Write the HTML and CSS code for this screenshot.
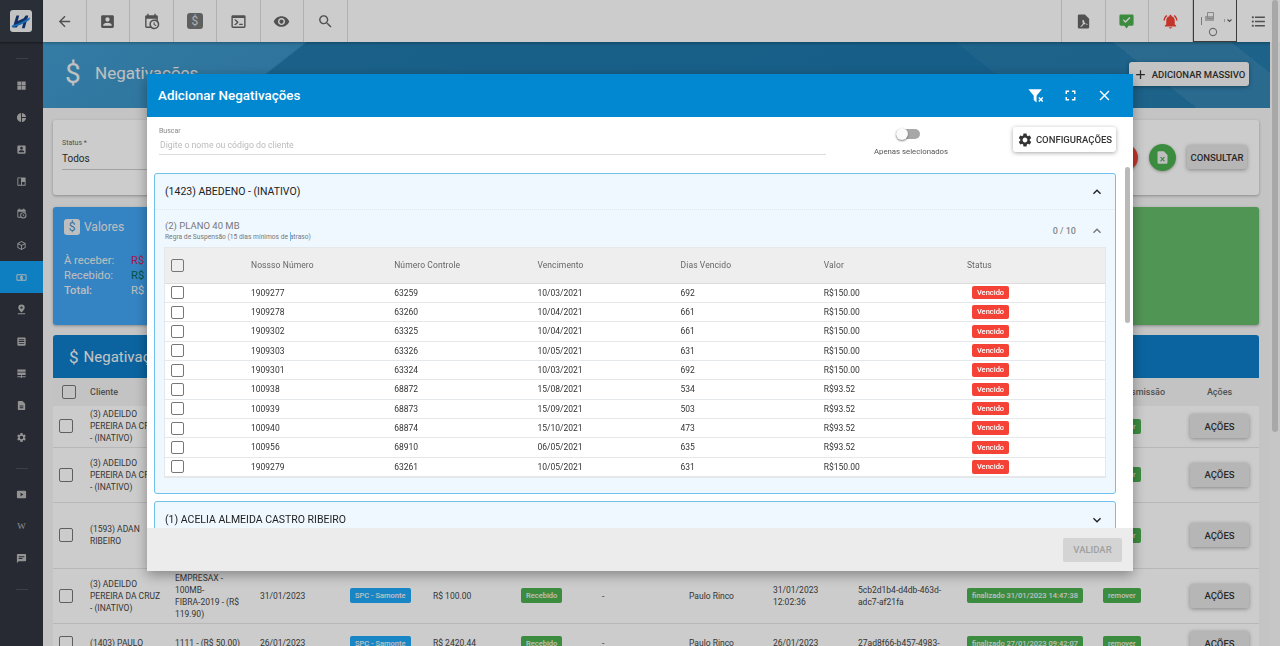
FILE: index.html
```html
<!DOCTYPE html>
<html lang="pt-BR">
<head>
    <meta charset="UTF-8">
    <title>Negativações</title>
    <link rel="stylesheet" href="styles.css">
</head>
<body>
    <svg class="sprite" xmlns="http://www.w3.org/2000/svg">
        <symbol id="i-back" viewBox="0 0 24 24"><path d="M20 11H7.83l5.59-5.59L12 4l-8 8 8 8 1.41-1.41L7.83 13H20v-2z"/></symbol>
        <symbol id="i-account" viewBox="0 0 24 24"><path d="M3 5v14c0 1.1.89 2 2 2h14c1.1 0 2-.9 2-2V5c0-1.1-.9-2-2-2H5c-1.11 0-2 .9-2 2zm12 4c0 1.66-1.34 3-3 3s-3-1.34-3-3 1.34-3 3-3 3 1.34 3 3zm-9 8c0-2 4-3.1 6-3.1s6 1.1 6 3.1v1H6v-1z"/></symbol>
        <symbol id="i-calendar" viewBox="0 0 24 24"><path d="M15,13H16.5V15.82L18.94,17.23L18.19,18.53L15,16.69V13M19,8H5V19H9.67C9.24,18.09 9,17.07 9,16A7,7 0 0,1 16,9C17.07,9 18.09,9.24 19,9.67V8M5,21C3.89,21 3,20.1 3,19V5C3,3.89 3.89,3 5,3H6V1H8V3H16V1H18V3H19A2,2 0 0,1 21,5V11.1C22.24,12.36 23,14.09 23,16A7,7 0 0,1 16,23C14.09,23 12.36,22.24 11.1,21H5M16,11.15A4.85,4.85 0 0,0 11.15,16C11.15,18.68 13.32,20.85 16,20.85A4.85,4.85 0 0,0 20.85,16C20.85,13.32 18.68,11.15 16,11.15Z"/></symbol>
        <symbol id="i-console" viewBox="0 0 24 24"><path d="M20,19V7H4V19H20M20,3A2,2 0 0,1 22,5V19A2,2 0 0,1 20,21H4A2,2 0 0,1 2,19V5C2,3.89 2.9,3 4,3H20M13,17V15H18V17H13M9.58,13L5.57,9H8.4L11.7,12.3C12.09,12.69 12.09,13.33 11.7,13.72L8.42,17H5.59L9.58,13Z"/></symbol>
        <symbol id="i-eye" viewBox="0 0 24 24"><path d="M12 4.5C7 4.5 2.73 7.61 1 12c1.73 4.39 6 7.5 11 7.5s9.27-3.11 11-7.5c-1.73-4.39-6-7.5-11-7.5zM12 17c-2.76 0-5-2.24-5-5s2.24-5 5-5 5 2.24 5 5-2.24 5-5 5zm0-8c-1.66 0-3 1.34-3 3s1.34 3 3 3 3-1.34 3-3-1.34-3-3-3z"/></symbol>
        <symbol id="i-search" viewBox="0 0 24 24"><path d="M15.5 14h-.79l-.28-.27C15.41 12.59 16 11.11 16 9.5 16 5.91 13.09 3 9.5 3S3 5.91 3 9.5 5.91 16 9.5 16c1.61 0 3.09-.59 4.23-1.57l.27.28v.79l5 4.99L20.49 19l-4.99-5zm-6 0C7.01 14 5 11.99 5 9.5S7.01 5 9.5 5 14 7.01 14 9.5 11.99 14 9.5 14z"/></symbol>
        <symbol id="i-pdf" viewBox="0 0 24 24"><path fill-rule="evenodd" d="M6 2h8l6 6v12a2 2 0 0 1-2 2H6a2 2 0 0 1-2-2V4a2 2 0 0 1 2-2zm5.300 8c-.9 0-1.100 1-.8 2.400.2.7.4 1.300.7 1.900-.7 1.600-1.800 3.200-3 4-.8.5-.5 1.500.4 1.300 1.200-.3 2.600-1.900 3.400-3.300 1-.3 2-.5 3-.6.9.8 1.900 1.300 2.500 1 .7-.4.300-1.500-.8-1.600-.5 0-1.200 0-1.900.1-.8-.9-1.500-2-1.900-3 .2-1 .1-2.200-1.600-2.200z"/></symbol>
        <symbol id="i-message" viewBox="0 0 24 24"><path fill-rule="evenodd" d="M4 2h16a2 2 0 0 1 2 2v12a2 2 0 0 1-2 2h-5l-3 4-3-4H4a2 2 0 0 1-2-2V4a2 2 0 0 1 2-2zm6.500 12.200 7-7-1.400-1.400-5.600 5.600-2.600-2.600L7 10.200z"/></symbol>
        <symbol id="i-bell" viewBox="0 0 24 24"><path d="M7.58 4.08 6.15 2.65C3.75 4.48 2.17 7.3 2.03 10.5h2c.15-2.65 1.51-4.97 3.55-6.42zm12.39 6.42h2c-.15-3.2-1.73-6.02-4.12-7.85l-1.42 1.43c2.02 1.45 3.39 3.77 3.54 6.42zM18 11c0-3.07-1.64-5.64-4.5-6.32V4c0-.83-.67-1.5-1.5-1.5s-1.5.67-1.5 1.5v.68C7.63 5.36 6 7.92 6 11v5l-2 2v1h16v-1l-2-2v-5zm-6 11c.14 0 .27-.01.4-.04.65-.14 1.18-.58 1.44-1.18.1-.24.15-.5.15-.78h-4c.01 1.1.9 2 2.01 2z"/></symbol>
        <symbol id="i-list" viewBox="0 0 24 24"><path d="M4 10.5c-.83 0-1.5.67-1.5 1.500s.67 1.500 1.500 1.500 1.500-.67 1.500-1.500-.67-1.500-1.500-1.500zm0-6c-.83 0-1.500.67-1.500 1.500S3.170 7.500 4 7.500 5.500 6.830 5.500 6 4.830 4.500 4 4.500zm0 12c-.83 0-1.500.68-1.500 1.500s.68 1.500 1.500 1.500 1.500-.68 1.500-1.500-.67-1.500-1.500-1.500zM7 19h14v-2H7v2zm0-6h14v-2H7v2zm0-8v2h14V5H7z"/></symbol>
        <symbol id="i-plus" viewBox="0 0 24 24"><path d="M19 13h-6v6h-2v-6H5v-2h6V5h2v6h6v2z"/></symbol>
        <symbol id="i-close" viewBox="0 0 24 24"><path d="M19 6.410 17.590 5 12 10.590 6.410 5 5 6.410 10.590 12 5 17.590 6.410 19 12 13.410 17.590 19 19 17.590 13.410 12z"/></symbol>
        <symbol id="i-full" viewBox="0 0 24 24"><path d="M7 14H5v5h5v-2H7v-3zM5 10h2V7h3V5H5v5zm12 7h-3v2h5v-5h-2v3zM14 5v2h3v3h2V5h-5z"/></symbol>
        <symbol id="i-up" viewBox="0 0 24 24"><path d="M7.410 15.410 12 10.830l4.590 4.580L18 14l-6-6-6 6z"/></symbol>
        <symbol id="i-down" viewBox="0 0 24 24"><path d="M7.410 8.590 12 13.170l4.590-4.580L18 10l-6 6-6-6z"/></symbol>
        <symbol id="i-gear" viewBox="0 0 24 24"><path d="M19.14 12.94c.04-.3.06-.61.06-.94 0-.32-.02-.64-.07-.94l2.03-1.58c.18-.14.23-.41.12-.61l-1.92-3.32c-.12-.22-.37-.29-.59-.22l-2.39.96c-.5-.38-1.03-.7-1.62-.94l-.36-2.54c-.04-.24-.24-.41-.48-.41h-3.84c-.24 0-.43.17-.47.41l-.36 2.54c-.59.24-1.13.57-1.62.94l-2.39-.96c-.22-.08-.47 0-.59.22L2.74 8.87c-.12.21-.08.47.12.61l2.03 1.58c-.05.3-.09.63-.09.94s.02.64.07.94l-2.03 1.58c-.18.14-.23.41-.12.61l1.92 3.32c.12.22.37.29.59.22l2.39-.96c.5.38 1.03.7 1.62.94l.36 2.54c.05.24.24.41.48.41h3.84c.24 0 .44-.17.47-.41l.36-2.54c.59-.24 1.13-.56 1.62-.94l2.39.96c.22.08.47 0 .59-.22l1.92-3.32c.12-.22.07-.47-.12-.61l-2.01-1.58zM12 15.6c-1.98 0-3.6-1.62-3.6-3.6s1.62-3.6 3.6-3.6 3.6 1.62 3.6 3.6-1.62 3.6-3.6 3.6z"/></symbol>
        <symbol id="i-filter" viewBox="0 0 24 24"><path d="M2 3h19l-7.500 9.500V22l-4-3.500v-6z"/><path d="M16 15.400 17.400 14l2.100 2.100L21.600 14l1.400 1.400-2.100 2.100 2.100 2.100-1.400 1.400-2.100-2.100-2.100 2.100-1.400-1.400 2.100-2.100z"/></symbol>
        <symbol id="i-grid" viewBox="0 0 24 24"><path d="M3 3h8.500v8.500H3zM12.500 3H21v8.500h-8.500zM3 12.500h8.500V21H3zM12.500 12.500H21V21h-8.500z"/></symbol>
        <symbol id="i-pie" viewBox="0 0 24 24"><path d="M11 2v20c-5.070-.5-9-4.790-9-10s3.930-9.500 9-10zm2 0v9h9c-.47-4.740-4.260-8.530-9-9zm0 11v9c4.740-.47 8.530-4.260 9-9h-9z"/></symbol>
        <symbol id="i-board" viewBox="0 0 24 24"><path fill-rule="evenodd" d="M4 3h16a1 1 0 0 1 1 1v16a1 1 0 0 1-1 1H4a1 1 0 0 1-1-1V4a1 1 0 0 1 1-1zm1 2v14h6V5zm8 8v6h6v-6z"/></symbol>
        <symbol id="i-cube" viewBox="0 0 24 24"><path fill-rule="evenodd" d="M12 2l9 5v10l-9 5-9-5V7zm0 2.300L6.100 7.600 12 10.900l5.900-3.300zM5 9.300v6.500l6 3.400v-6.600zm14 0-6 3.300v6.600l6-3.400z"/></symbol>
        <symbol id="i-money" viewBox="0 0 24 24"><path fill-rule="evenodd" d="M3 5h18a2 2 0 0 1 2 2v10a2 2 0 0 1-2 2H3a2 2 0 0 1-2-2V7a2 2 0 0 1 2-2zm0 2v10h18V7zm8 1h2v1h2v2h-4v.5h3a1 1 0 0 1 1 1V15a1 1 0 0 1-1 1h-1v1h-2v-1H9v-2h4v-.5h-3a1 1 0 0 1-1-1V10a1 1 0 0 1 1-1h1z"/></symbol>
        <symbol id="i-pin" viewBox="0 0 24 24"><path fill-rule="evenodd" d="M12 1a7 7 0 0 1 7 7c0 4.500-7 10-7 10S5 12.500 5 8a7 7 0 0 1 7-7zm0 4.500a2.500 2.500 0 1 0 0 5 2.500 2.500 0 0 0 0-5zM4 20h16v2.500H4z"/></symbol>
        <symbol id="i-lines" viewBox="0 0 24 24"><path fill-rule="evenodd" d="M5 3h14a2 2 0 0 1 2 2v14a2 2 0 0 1-2 2H5a2 2 0 0 1-2-2V5a2 2 0 0 1 2-2zm1 4v2h12V7zm0 4v2h12v-2zm0 4v2h12v-2z"/></symbol>
        <symbol id="i-server" viewBox="0 0 24 24"><path d="M3 3h18v5H3zM3 10h18v5H3zM11 16h2v2h8v2h-8v2h-2v-2H3v-2h8z"/></symbol>
        <symbol id="i-doc" viewBox="0 0 24 24"><path fill-rule="evenodd" d="M6 2h8l6 6v12a2 2 0 0 1-2 2H6a2 2 0 0 1-2-2V4a2 2 0 0 1 2-2zm2 10v2h8v-2zm0 4v2h8v-2z"/></symbol>
        <symbol id="i-video" viewBox="0 0 24 24"><path fill-rule="evenodd" d="M4 4h16a2 2 0 0 1 2 2v12a2 2 0 0 1-2 2H4a2 2 0 0 1-2-2V6a2 2 0 0 1 2-2zm6 4v8l6-4z"/></symbol>
        <symbol id="i-chat" viewBox="0 0 24 24"><path fill-rule="evenodd" d="M4 2h16a2 2 0 0 1 2 2v12a2 2 0 0 1-2 2H6l-4 4V4a2 2 0 0 1 2-2zm2 5v2h12V7zm0 4v2h8v-2z"/></symbol>
        <symbol id="i-excel" viewBox="0 0 24 24"><path fill-rule="evenodd" d="M6 2h8l6 6v12a2 2 0 0 1-2 2H6a2 2 0 0 1-2-2V4a2 2 0 0 1 2-2zm1.800 9 3 3.500-3 3.500h2.400l1.800-2.200 1.800 2.200h2.400l-3-3.500 3-3.500h-2.400L12 13.200 10.200 11z"/></symbol>
    </svg>

    <aside class="sidebar">
        <div class="logo-wrap">
            <div class="logo">
                <svg viewBox="0 0 24 24" class="logo-svg">
                    <path fill="#1a3d7c" d="M3 19 7 6h3l-1.500 6L15 9l2-3h3l-4 14h-3l1.500-6-6 3-1 2z"/>
                    <path fill="#1e88e5" d="M2 17c6-1 13-5 20-9l-1 3c-6 4-13 7-19 8z"/>
                </svg>
            </div>
        </div>
        <div class="side-rule"></div>
        <nav class="side-nav">
            <a class="side-item"><svg><use href="#i-grid"/></svg></a>
            <a class="side-item"><svg><use href="#i-pie"/></svg></a>
            <a class="side-item"><svg><use href="#i-account"/></svg></a>
            <a class="side-item"><svg><use href="#i-board"/></svg></a>
            <a class="side-item"><svg><use href="#i-calendar"/></svg></a>
            <a class="side-item"><svg><use href="#i-cube"/></svg></a>
            <a class="side-item active"><svg><use href="#i-money"/></svg></a>
            <a class="side-item"><svg><use href="#i-pin"/></svg></a>
            <a class="side-item"><svg><use href="#i-lines"/></svg></a>
            <a class="side-item"><svg><use href="#i-server"/></svg></a>
            <a class="side-item"><svg><use href="#i-doc"/></svg></a>
            <a class="side-item"><svg><use href="#i-gear"/></svg></a>
        </nav>
        <div class="side-rule low"></div>
        <nav class="side-nav">
            <a class="side-item"><svg><use href="#i-video"/></svg></a>
            <a class="side-item wiki">W</a>
            <a class="side-item"><svg><use href="#i-chat"/></svg></a>
        </nav>
        <div class="side-rule low"></div>
    </aside>

    <div class="main">
        <header class="topbar">
            <a class="top-item"><svg><use href="#i-back"/></svg></a>
            <a class="top-item"><svg><use href="#i-account"/></svg></a>
            <a class="top-item"><svg><use href="#i-calendar"/></svg></a>
            <a class="top-item"><span class="dollar-box">$</span></a>
            <a class="top-item"><svg><use href="#i-console"/></svg></a>
            <a class="top-item"><svg><use href="#i-eye"/></svg></a>
            <a class="top-item"><svg><use href="#i-search"/></svg></a>
            <div class="top-space"></div>
            <a class="top-item"><svg><use href="#i-pdf"/></svg></a>
            <a class="top-item green"><svg><use href="#i-message"/></svg></a>
            <a class="top-item red"><svg><use href="#i-bell"/></svg></a>
            <a class="top-user">
                <svg viewBox="0 0 41 40" class="user-svg">
                    <rect x="7" y="17" width="1" height="8" fill="#999"/>
                    <path fill="#c4c4c4" d="M11 16h9v5h-9z"/>
                    <path fill="none" stroke="#aaa" d="M13.500 12.500h6v6h-6z"/>
                    <rect x="30" y="19" width="1" height="3" fill="#bbb"/>
                    <path fill="none" stroke="#666" stroke-width="1.100" d="M33.500 19.500l2 2 2-2"/>
                    <circle cx="19" cy="32" r="3.600" fill="none" stroke="#888" stroke-width="1.100"/>
                </svg>
            </a>
            <a class="top-item last"><svg><use href="#i-list"/></svg></a>
        </header>

        <div class="page">
            <div class="hero">
                <span class="hero-dollar">$</span>
                <h1>Negativações</h1>
                <button class="btn btn-massivo"><svg><use href="#i-plus"/></svg>ADICIONAR MASSIVO</button>
            </div>

            <div class="content">
                <section class="filters">
                    <div class="field">
                        <label>Status *</label>
                        <div class="field-value">Todos</div>
                    </div>
                    <div class="filter-actions">
                        <span class="round red-round"></span>
                        <span class="round green-round"><svg><use href="#i-excel"/></svg></span>
                        <button class="btn btn-consultar">CONSULTAR</button>
                    </div>
                </section>

                <section class="summary">
                    <div class="sum-card sum-blue">
                        <div class="sum-title"><span class="sum-dollar">$</span>Valores</div>
                        <div class="sum-line"><span>À receber:</span><b class="pink">R$ 1</b></div>
                        <div class="sum-line"><span>Recebido:</span><b class="teal">R$ 2</b></div>
                        <div class="sum-line total"><span>Total:</span><b>R$ 3</b></div>
                    </div>
                    <div class="sum-card sum-green"></div>
                </section>

                <section class="list-card">
                    <div class="list-head"><span class="list-dollar">$</span>Negativações</div>
                    <table class="list-table">
                        <colgroup>
                            <col class="c-check"><col class="c-client"><col class="c-plan"><col class="c-date">
                            <col class="c-spc"><col class="c-value"><col class="c-status"><col class="c-dash">
                            <col class="c-user"><col class="c-sent"><col class="c-uuid"><col class="c-final">
                            <col class="c-remove"><col class="c-actions">
                        </colgroup>
                        <thead>
                            <tr>
                                <th><span class="check"></span></th>
                                <th>Cliente</th><th></th><th></th><th></th><th></th><th></th><th></th>
                                <th></th><th></th><th></th><th></th><th class="trans">Transmissão</th><th class="center">Ações</th>
                            </tr>
                        </thead>
                        <tbody>
                            <tr>
                                <td><span class="check"></span></td>
                                <td>(3) ADEILDO<br>PEREIRA DA CRUZ<br>- (INATIVO)</td><td></td><td></td><td></td><td></td><td></td><td></td><td></td><td></td><td></td><td></td>
                                <td><span class="tag tag-green">remover</span></td>
                                <td class="center"><button class="btn btn-acoes">AÇÕES</button></td>
                            </tr>
                            <tr>
                                <td><span class="check"></span></td>
                                <td>(3) ADEILDO<br>PEREIRA DA CRUZ<br>- (INATIVO)</td><td></td><td></td><td></td><td></td><td></td><td></td><td></td><td></td><td></td><td></td>
                                <td><span class="tag tag-green">remover</span></td>
                                <td class="center"><button class="btn btn-acoes">AÇÕES</button></td>
                            </tr>
                            <tr>
                                <td><span class="check"></span></td>
                                <td>(1593) ADAN<br>RIBEIRO</td><td></td><td></td><td></td><td></td><td></td><td></td><td></td><td></td><td></td><td></td>
                                <td><span class="tag tag-green">remover</span></td>
                                <td class="center"><button class="btn btn-acoes">AÇÕES</button></td>
                            </tr>
                            <tr>
                                <td><span class="check"></span></td>
                                <td>(3) ADEILDO<br>PEREIRA DA CRUZ<br>- (INATIVO)</td>
                                <td>EMPRESAX -<br>100MB-<br>FIBRA-2019 - (R$<br>119.90)</td>
                                <td>31/01/2023</td>
                                <td><span class="tag tag-blue">SPC - Samonte</span></td>
                                <td>R$ 100.00</td>
                                <td><span class="tag tag-green">Recebido</span></td>
                                <td>-</td>
                                <td>Paulo Rinco</td>
                                <td>31/01/2023<br>12:02:36</td>
                                <td>5cb2d1b4-d4db-463d-<br>adc7-af21fa</td>
                                <td><span class="tag tag-green">finalizado 31/01/2023 14:47:38</span></td>
                                <td><span class="tag tag-green">remover</span></td>
                                <td class="center"><button class="btn btn-acoes">AÇÕES</button></td>
                            </tr>
                            <tr>
                                <td><span class="check"></span></td>
                                <td>(1403) PAULO</td>
                                <td>1111 - (R$ 50.00)</td>
                                <td>26/01/2023</td>
                                <td><span class="tag tag-blue">SPC - Samonte</span></td>
                                <td>R$ 2420.44</td>
                                <td><span class="tag tag-green">Recebido</span></td>
                                <td>-</td>
                                <td>Paulo Rinco</td>
                                <td>26/01/2023</td>
                                <td>27ad8f66-b457-4983-</td>
                                <td><span class="tag tag-green">finalizado 27/01/2023 09:42:07</span></td>
                                <td><span class="tag tag-green">remover</span></td>
                                <td class="center"><button class="btn btn-acoes">AÇÕES</button></td>
                            </tr>
                        </tbody>
                    </table>
                </section>
            </div>
        </div>
    </div>

    <div class="page-scroll"><div class="page-thumb"></div></div>

    <!-- dialog backdrop + modal -->
    <div class="backdrop"></div>
    <div class="modal">
        <div class="modal-head">
            <h2>Adicionar Negativações</h2>
            <div class="modal-tools">
                <svg><use href="#i-filter"/></svg>
                <svg><use href="#i-full"/></svg>
                <svg><use href="#i-close"/></svg>
            </div>
        </div>

        <div class="modal-search">
            <div class="search-field">
                <label>Buscar</label>
                <div class="search-input">Digite o nome ou código do cliente</div>
            </div>
            <div class="toggle-wrap">
                <span class="toggle"><span class="toggle-knob"></span></span>
                <span class="toggle-label">Apenas selecionados</span>
            </div>
            <button class="btn btn-config"><svg><use href="#i-gear"/></svg>CONFIGURAÇÕES</button>
        </div>

        <div class="modal-list">
            <div class="acc">
                <div class="acc-head">
                    <span>(1423) ABEDENO - (INATIVO)</span>
                    <svg><use href="#i-up"/></svg>
                </div>
                <div class="plan-head">
                    <div>
                        <div class="plan-name">(2) PLANO 40 MB</div>
                        <div class="plan-rule">Regra de Suspensão (15 dias mínimos de atraso)</div>
                    </div>
                    <div class="plan-right">
                        <span class="plan-count">0 / 10</span>
                        <svg><use href="#i-up"/></svg>
                    </div>
                </div>
                <table class="bill-table">
                    <colgroup>
                        <col class="b-check"><col class="b-col"><col class="b-col"><col class="b-col"><col class="b-col"><col class="b-col"><col class="b-last">
                    </colgroup>
                    <thead>
                        <tr>
                            <th><span class="check"></span></th>
                            <th>Nossso Número</th><th>Número Controle</th><th>Vencimento</th><th>Dias Vencido</th><th>Valor</th><th>Status</th>
                        </tr>
                    </thead>
                    <tbody>
                        <tr><td><span class="check"></span></td><td>1909277</td><td>63259</td><td>10/03/2021</td><td>692</td><td>R$150.00</td><td><span class="tag tag-red">Vencido</span></td></tr>
                        <tr><td><span class="check"></span></td><td>1909278</td><td>63260</td><td>10/04/2021</td><td>661</td><td>R$150.00</td><td><span class="tag tag-red">Vencido</span></td></tr>
                        <tr><td><span class="check"></span></td><td>1909302</td><td>63325</td><td>10/04/2021</td><td>661</td><td>R$150.00</td><td><span class="tag tag-red">Vencido</span></td></tr>
                        <tr><td><span class="check"></span></td><td>1909303</td><td>63326</td><td>10/05/2021</td><td>631</td><td>R$150.00</td><td><span class="tag tag-red">Vencido</span></td></tr>
                        <tr><td><span class="check"></span></td><td>1909301</td><td>63324</td><td>10/03/2021</td><td>692</td><td>R$150.00</td><td><span class="tag tag-red">Vencido</span></td></tr>
                        <tr><td><span class="check"></span></td><td>100938</td><td>68872</td><td>15/08/2021</td><td>534</td><td>R$93.52</td><td><span class="tag tag-red">Vencido</span></td></tr>
                        <tr><td><span class="check"></span></td><td>100939</td><td>68873</td><td>15/09/2021</td><td>503</td><td>R$93.52</td><td><span class="tag tag-red">Vencido</span></td></tr>
                        <tr><td><span class="check"></span></td><td>100940</td><td>68874</td><td>15/10/2021</td><td>473</td><td>R$93.52</td><td><span class="tag tag-red">Vencido</span></td></tr>
                        <tr><td><span class="check"></span></td><td>100956</td><td>68910</td><td>06/05/2021</td><td>635</td><td>R$93.52</td><td><span class="tag tag-red">Vencido</span></td></tr>
                        <tr><td><span class="check"></span></td><td>1909279</td><td>63261</td><td>10/05/2021</td><td>631</td><td>R$150.00</td><td><span class="tag tag-red">Vencido</span></td></tr>
                    </tbody>
                </table>
            </div>
            <div class="acc">
                <div class="acc-head">
                    <span>(1) ACELIA ALMEIDA CASTRO RIBEIRO</span>
                    <svg><use href="#i-down"/></svg>
                </div>
            </div>
        </div>

        <div class="modal-foot">
            <button class="btn-validar" disabled>VALIDAR</button>
        </div>

        <div class="modal-thumb"></div>
        <div class="text-cursor"></div>
    </div>
</body>
</html>
```

FILE: styles.css
```css
* {
    margin: 0;
    padding: 0;
    box-sizing: border-box;
}
html, body {
    height: 646px;
    overflow: hidden;
}
body {
    display: flex;
    font-family: Roboto, "Liberation Sans", sans-serif;
    background: #f5f5f5;
    color: #333;
}
.sprite {
    display: none;
}
svg {
    fill: currentColor;
}

/* Sidebar */
.sidebar {
    width: 43px;
    flex-shrink: 0;
    background: #31353f;
    color: #b8b8b8;
    display: flex;
    flex-direction: column;
    align-items: center;
}
.logo-wrap {
    height: 42px;
    width: 100%;
    display: flex;
    align-items: center;
    justify-content: center;
    padding-right: 2px;
    background: #353a45;
    box-shadow: 0 1px 2px rgba(0, 0, 0, 0.4);
}
.logo {
    width: 22px;
    height: 22px;
    background: #f4f4f4;
    border-radius: 3px;
}
.logo-svg {
    width: 22px;
    height: 22px;
    display: block;
}
.side-rule {
    width: 12px;
    height: 1px;
    background: #4a4f5a;
    margin: 16px 0 10px;
}
.side-rule.low {
    margin: 15px 0 9px;
}
.side-nav {
    width: 100%;
}
.side-item {
    height: 32px;
    display: flex;
    align-items: center;
    justify-content: center;
}
.side-item svg {
    width: 11px;
    height: 11px;
}
.side-item.active {
    background: #129ff0;
    color: #e0e0e0;
}
.wiki {
    font-family: "Liberation Serif", serif;
    font-size: 9px;
}

/* Top bar */
.main {
    flex: 1;
    min-width: 0;
    display: flex;
    flex-direction: column;
}
.topbar {
    height: 42px;
    flex-shrink: 0;
    background: #fff;
    display: flex;
    color: #666;
    box-shadow: 0 1px 3px rgba(0, 0, 0, 0.3);
    position: relative;
}
.top-item {
    width: 43.5px;
    display: flex;
    align-items: center;
    justify-content: center;
    border-right: 1px solid #ddd;
}
.top-item svg {
    width: 17px;
    height: 17px;
}
.top-item.last {
    border-right: 0;
}
.top-item.green {
    color: #4caf50;
}
.top-item.red {
    color: #f44336;
}
.top-space {
    flex: 1;
    border-right: 1px solid #ddd;
}
.dollar-box {
    width: 16px;
    height: 16px;
    border-radius: 3px;
    background: #777;
    color: #ddd;
    font-size: 12px;
    line-height: 16px;
    text-align: center;
}
.top-user {
    width: 44px;
    border: 1.5px solid #4a4a4a;
    border-top-width: 0;
}
.user-svg {
    width: 41px;
    height: 40px;
    display: block;
}

/* Page */
.page {
    flex: 1;
    min-height: 0;
    margin-right: 10px;
}
.hero {
    height: 66px;
    display: flex;
    align-items: center;
    padding: 0 22px 0 22px;
    color: #f0f0f0;
    background:
        linear-gradient(38deg, transparent 88%, rgba(255, 255, 255, 0.08) 88%, rgba(255, 255, 255, 0.08) 97%, transparent 97%),
        linear-gradient(38deg, transparent 76%, rgba(255, 255, 255, 0.04) 76%),
        linear-gradient(142deg, #429ccf 0%, #3a92c5 20%, #2279ab 20.2%, #1f78ab 40%, #1b76a9 100%);
}
.hero-dollar {
    font-size: 28px;
    width: 30px;
    margin-top: -3px;
}
.hero h1 {
    font-size: 17px;
    font-weight: 400;
    flex: 1;
    margin-bottom: 5px;
}
.btn {
    border: 0;
    background: #e4e4e4;
    color: #333;
    font-family: inherit;
    font-weight: 500;
    border-radius: 3px;
    box-shadow: 0 1px 4px rgba(0, 0, 0, 0.35);
    display: inline-flex;
    align-items: center;
    justify-content: center;
}
.btn svg {
    flex-shrink: 0;
}
.btn-massivo {
    width: 120px;
    height: 24px;
    font-size: 9.500px;
    background: #f5f5f5;
    margin: -2px -1px 0 0;
}
.btn-massivo svg {
    width: 15px;
    height: 15px;
    margin-right: 4px;
}
.content {
    padding: 12px 11px 0 10px;
    display: flex;
    flex-direction: column;
    gap: 12px;
}
.filters {
    height: 75px;
    background: #fff;
    border-radius: 3px;
    box-shadow: 0 1px 3px rgba(0, 0, 0, 0.3);
    display: flex;
    justify-content: space-between;
    padding: 19px 12px 0 9px;
}
.field {
    width: 300px;
}
.field label {
    display: block;
    font-size: 7px;
    color: #666;
    margin-bottom: 6px;
}
.field-value {
    font-size: 10px;
    color: #333;
    padding-bottom: 5px;
    border-bottom: 1px solid #ccc;
}
.filter-actions {
    display: flex;
    align-items: center;
    gap: 11px;
    height: 36px;
}
.round {
    width: 27px;
    height: 27px;
    border-radius: 50%;
    display: flex;
    align-items: center;
    justify-content: center;
    color: #eee;
    box-shadow: 0 1px 3px rgba(0, 0, 0, 0.3);
}
.round svg {
    width: 15px;
    height: 15px;
}
.red-round {
    background: #f44336;
}
.green-round {
    background: #4caf50;
}
.btn-consultar {
    width: 60px;
    height: 24px;
    font-size: 9.500px;
}
.summary {
    height: 118px;
    display: grid;
    grid-template-columns: 1fr 1fr;
    gap: 12px;
}
.sum-card {
    border-radius: 3px;
    box-shadow: 0 1px 3px rgba(0, 0, 0, 0.3);
    color: #eee;
    padding: 12px 11px;
    font-size: 11.200px;
}
.sum-blue {
    background: #42a5f5;
}
.sum-green {
    background: #66bb6a;
}
.sum-title {
    display: flex;
    align-items: center;
    gap: 4px;
    font-size: 12px;
    margin-bottom: 19px;
}
.sum-dollar {
    width: 16px;
    height: 16px;
    background: #eee;
    color: #3f8fd0;
    border-radius: 3px;
    text-align: center;
    font-size: 12px;
    line-height: 16px;
}
.sum-line {
    display: flex;
    height: 15px;
}
.sum-line span {
    width: 67px;
}
.sum-line b {
    font-weight: 400;
}
.sum-line.total {
    font-weight: 500;
}
.pink {
    color: #d81b60;
}
.teal {
    color: #00695c;
}
.list-card {
    background: #fff;
    border-radius: 3px 3px 0 0;
    margin-top: -2px;
}
.list-head {
    height: 43px;
    background: #0e7dc7;
    color: #f5f5f5;
    border-radius: 3px 3px 0 0;
    display: flex;
    align-items: center;
    padding-left: 16px;
    font-size: 15px;
}
.list-dollar {
    font-size: 17px;
    margin-right: 5px;
}
.list-table {
    width: 1206px;
    table-layout: fixed;
    border-collapse: collapse;
    font-size: 8.500px;
    color: #444;
}
.c-check { width: 32px; }
.c-client { width: 85px; }
.c-plan { width: 85px; }
.c-date { width: 90px; }
.c-spc { width: 83px; }
.c-value { width: 88px; }
.c-status { width: 81px; }
.c-dash { width: 87px; }
.c-user { width: 84px; }
.c-sent { width: 85px; }
.c-uuid { width: 109px; }
.c-final { width: 136px; }
.c-remove { width: 82px; }
.c-actions { width: 79px; }
.list-table th {
    height: 28px;
    background: #f4f4f4;
    text-align: left;
    font-size: 9px;
    font-weight: 500;
    color: #666;
    padding: 0 5px;
}
.list-table th.trans {
    padding-left: 15px;
    white-space: nowrap;
}
.list-table td {
    padding: 0 5px;
    line-height: 12px;
    border-bottom: 1px solid #e6e6e6;
    vertical-align: middle;
}
.list-table tbody tr:nth-child(1) td { height: 41px; }
.list-table tbody tr:nth-child(2) td { height: 55px; }
.list-table tbody tr:nth-child(3) td { height: 66px; }
.list-table tbody tr:nth-child(4) td { height: 55px; }
.list-table tbody tr:nth-child(5) td { height: 40px; }
.center {
    text-align: center !important;
}
.check {
    display: inline-block;
    width: 14px;
    height: 14px;
    border: 1.500px solid #777;
    border-radius: 2px;
    vertical-align: middle;
}
.list-table .check {
    margin-left: 1px;
}
.list-table th .check {
    margin-left: 4px;
}
.tag {
    display: inline-block;
    padding: 0 5px;
    height: 15px;
    line-height: 15px;
    border-radius: 2px;
    font-size: 7.500px;
    font-weight: 500;
    color: #f0f0f0;
    white-space: nowrap;
}
.tag-green {
    background: #4caf50;
}
.tag-blue {
    background: #1fa8f5;
}
.tag-red {
    background: #f44336;
    color: #fff;
}
.btn-acoes {
    width: 59px;
    height: 24px;
    font-size: 9.500px;
}

.page-scroll {
    position: fixed;
    top: 42px;
    right: 0;
    bottom: 0;
    width: 10px;
    background: #f8f8f8;
}
.page-thumb {
    position: absolute;
    top: -42px;
    left: 2px;
    width: 6px;
    height: 432px;
    border-radius: 3px;
    background: #d2d2d2;
}

/* Dialog */
.backdrop {
    position: fixed;
    inset: 0;
    background: rgba(0, 0, 0, 0.2);
}
.modal {
    position: fixed;
    left: 147px;
    top: 74px;
    width: 986px;
    height: 497px;
    background: #fff;
    box-shadow: 0 4px 12px rgba(0, 0, 0, 0.35);
    display: flex;
    flex-direction: column;
    overflow: hidden;
}
.modal-head {
    height: 43px;
    flex-shrink: 0;
    background: #0288d1;
    color: #fff;
    display: flex;
    align-items: center;
    justify-content: space-between;
    padding: 0 20px 0 11px;
}
.modal-head h2 {
    font-size: 13.400px;
    font-weight: 500;
}
.modal-tools {
    display: flex;
    align-items: center;
    gap: 17.500px;
}
.modal-tools svg {
    width: 17px;
    height: 17px;
}
.modal-search {
    height: 56px;
    flex-shrink: 0;
    display: flex;
    padding: 10px 17px 0 12px;
    position: relative;
}
.search-field {
    width: 667px;
    height: 28px;
    border-bottom: 1px solid #ddd;
}
.search-field label {
    display: block;
    font-size: 7px;
    color: #888;
    margin: 1px 0 5px;
    line-height: 7px;
}
.search-input {
    font-size: 8.700px;
    color: #bbb;
    padding-left: 1px;
}
.toggle-wrap {
    width: 170px;
    display: flex;
    flex-direction: column;
    align-items: center;
    gap: 4px;
    padding-top: 2px;
}
.toggle {
    width: 24px;
    height: 10px;
    border-radius: 5px;
    background: #a8a8a8;
    display: block;
    position: relative;
    margin: 0 6px 0 0;
}
.toggle-knob {
    position: absolute;
    left: 0;
    top: -1px;
    width: 12px;
    height: 12px;
    border-radius: 50%;
    background: #fafafa;
    box-shadow: 0 1px 2px rgba(0, 0, 0, 0.5);
}
.toggle-label {
    font-size: 7.800px;
    color: #555;
    margin-top: 4px;
}
.btn-config {
    width: 103px;
    height: 25px;
    font-size: 9.500px;
    background: #fff;
    margin-left: auto;
}
.btn-config svg {
    width: 16px;
    height: 16px;
    margin-right: 3px;
}
.modal-list {
    flex: 1;
    min-height: 0;
    overflow: hidden;
    padding: 0 17px 0 7px;
    display: flex;
    flex-direction: column;
    gap: 7px;
}
.acc {
    flex-shrink: 0;
    border: 1px solid #6fc0ee;
    border-radius: 3px;
    background: #eff8ff;
}
.acc:first-child {
    height: 321px;
}
.acc-head {
    height: 36px;
    display: flex;
    align-items: center;
    justify-content: space-between;
    padding: 0 10px 0 10px;
    font-size: 10.500px;
    color: #222;
    border-bottom: 1px dotted #dde8ef;
}
.acc-head svg {
    width: 16px;
    height: 16px;
}
.plan-head {
    height: 38px;
    display: flex;
    align-items: center;
    justify-content: space-between;
    padding: 3px 10px 0 10px;
    color: #777;
}
.plan-name {
    font-size: 9.500px;
}
.plan-rule {
    font-size: 6.700px;
    margin-top: 2px;
}
.plan-right {
    display: flex;
    align-items: center;
    gap: 13px;
}
.plan-count {
    font-size: 9px;
    font-weight: 500;
    color: #888;
}
.plan-right svg {
    width: 16px;
    height: 16px;
}
.bill-table {
    width: 940px;
    margin-left: 10px;
    table-layout: fixed;
    border-collapse: collapse;
    background: #fff;
    font-size: 8.500px;
    color: #333;
    box-shadow: 0 0 0 1px #e4e8ea;
}
.b-check { width: 85px; }
.b-col { width: 143.200px; }
.b-last { width: 139px; }
.bill-table th {
    height: 35px;
    background: #eee;
    text-align: left;
    font-weight: 400;
    color: #666;
    padding-left: 1px;
    border-bottom: 1px solid #ddd;
    letter-spacing: 0.1px;
}
.bill-table th:first-child,
.bill-table td:first-child {
    padding-left: 6px;
}
.bill-table td {
    height: 19.350px;
    padding-left: 1px;
    border-bottom: 1px solid #e4e8ea;
}
.bill-table .check {
    width: 13px;
    height: 13px;
    display: block;
}
.bill-table .tag {
    margin-left: 5px;
    font-size: 7.500px;
    height: 13.500px;
    line-height: 13.500px;
}
.modal-foot {
    height: 43px;
    flex-shrink: 0;
    background: #ececec;
    display: flex;
    align-items: center;
    justify-content: flex-end;
    padding-right: 11px;
}
.btn-validar {
    width: 59px;
    height: 24px;
    border: 0;
    border-radius: 2px;
    background: #d4d4d4;
    color: #a0a0a0;
    font-family: inherit;
    font-size: 9.500px;
    font-weight: 500;
}
.modal-thumb {
    position: absolute;
    left: 978px;
    top: 93px;
    width: 5px;
    height: 156px;
    border-radius: 3px;
    background: #b9b9b9;
}
.text-cursor {
    position: absolute;
    left: 143px;
    top: 158px;
    width: 1px;
    height: 9px;
    background: #7ab6e6;
}
```
